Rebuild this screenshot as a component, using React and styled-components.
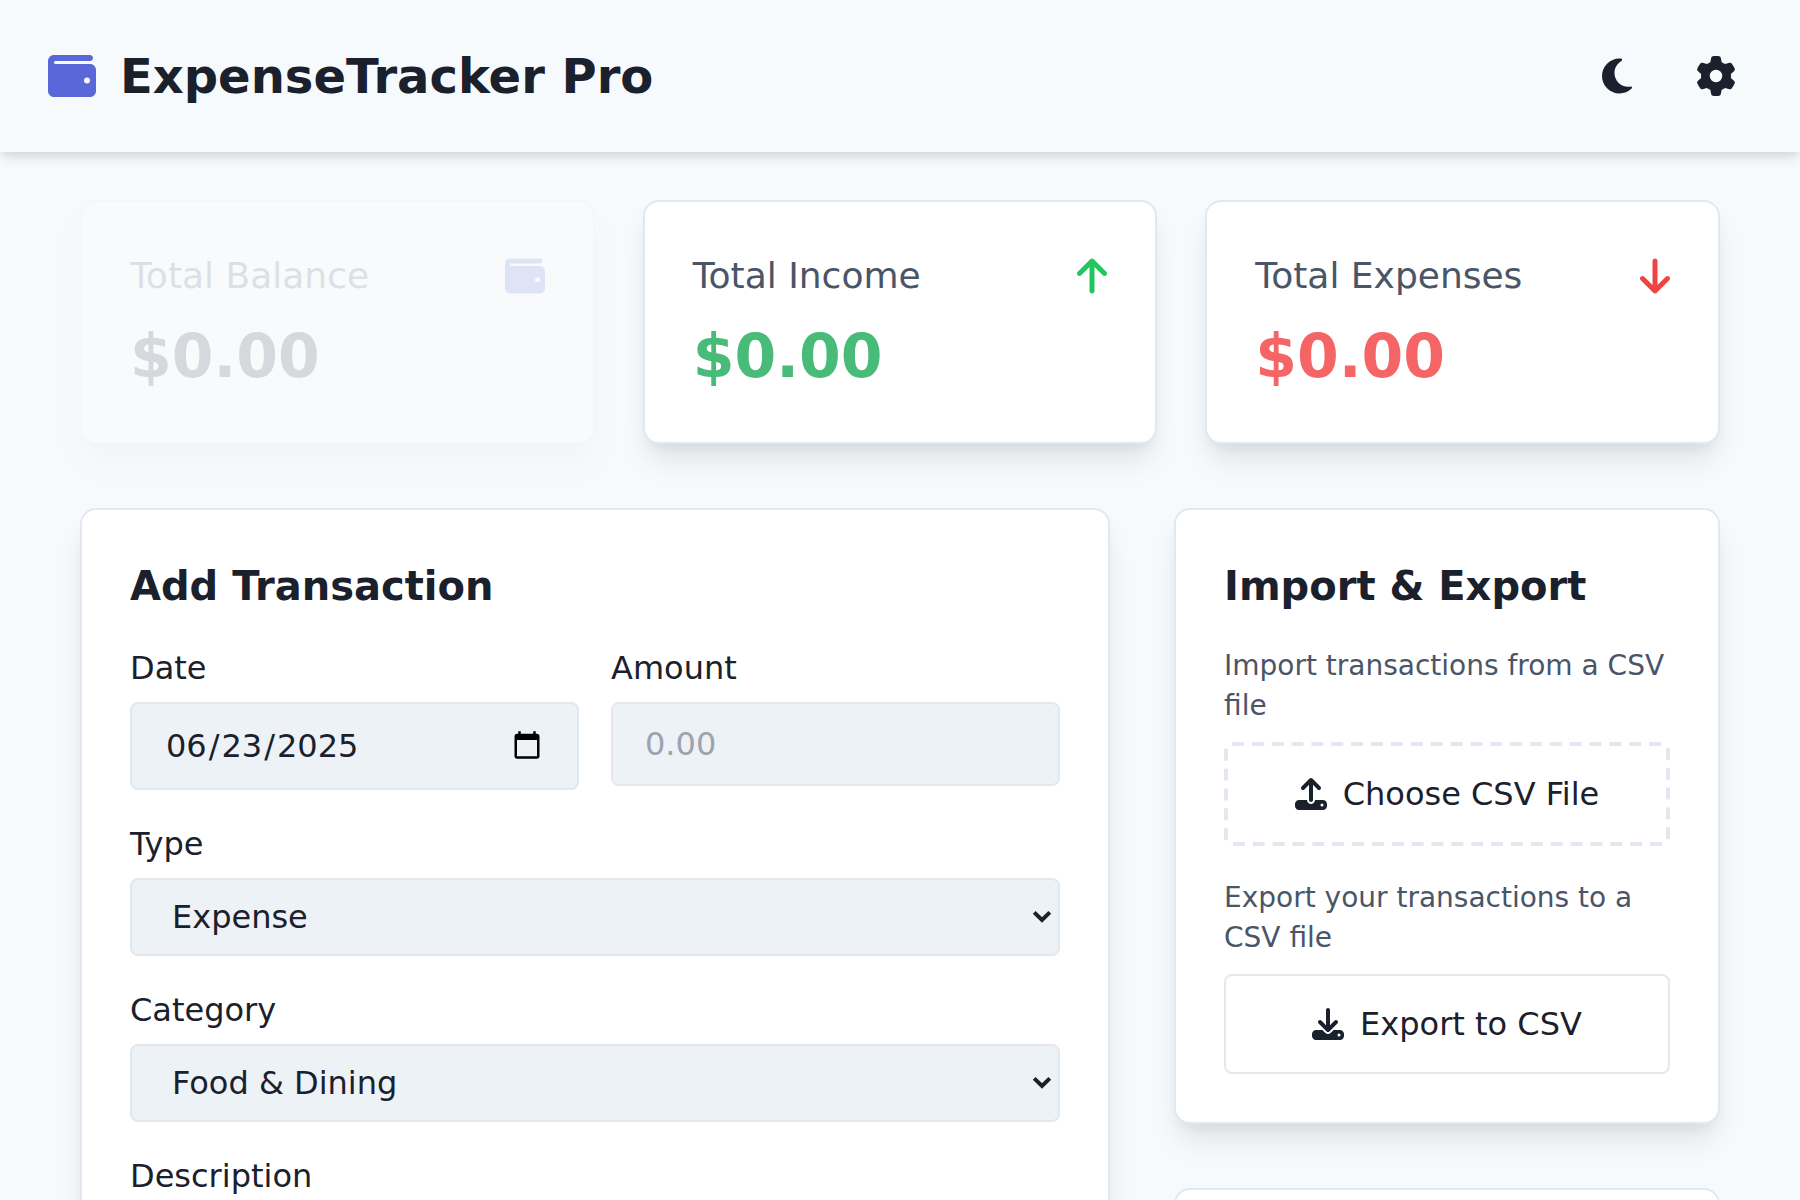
import React, { useState } from 'react';
import styled, { createGlobalStyle, ThemeProvider } from 'styled-components';
import {
  FaArrowDown,
  FaArrowUp,
  FaDownload,
  FaGear,
  FaMoon,
  FaUpload,
  FaWallet,
} from 'react-icons/fa6';

const theme = {
  colors: {
    card: '#ffffff',
    field: '#edf2f7',
    border: '#e2e8f0',
    text: '#1a202c',
    muted: '#4a5568',
    placeholder: '#9ca3af',
    primary: '#5a67d8',
    income: '#48bb78',
    incomeIcon: '#22c55e',
    expense: '#f56565',
    expenseIcon: '#ef4444',
  },
  sizes: {
    tablet: '1100px',
  },
};

const GlobalStyle = createGlobalStyle`
  *, *::before, *::after {
    box-sizing: border-box;
  }
  body {
    margin: 0;
    background: #f7fafc;
    color: #1a202c;
    font-family: "DejaVu Sans", sans-serif;
    font-size: 32px;
    line-height: 48px;
  }
  h1, h2, h3, p {
    margin: 0;
  }
  button, input, select {
    font: inherit;
    color: inherit;
  }
  svg {
    display: block;
    flex-shrink: 0;
  }
`;

// these glyphs are 384 wide on a 512 grid, so the box is narrowed to fit
const MoonIcon = styled(FaMoon)`
  width: 30px;
`;

const UpIcon = styled(FaArrowUp)`
  width: 30px;
`;

const DownIcon = styled(FaArrowDown)`
  width: 30px;
`;

const Header = styled.header`
  display: flex;
  align-items: center;
  justify-content: space-between;
  padding: 32px 48px;
  box-shadow: 0 8px 12px -2px rgba(0, 0, 0, 0.1), 0 4px 8px -2px rgba(0, 0, 0, 0.06);
`;

const Brand = styled.div`
  display: flex;
  align-items: center;
  gap: 24px;
  font-size: 48px;
  svg {
    color: ${props => props.theme.colors.primary};
  }
  h1 {
    font-size: 48px;
    line-height: 64px;
    font-weight: 700;
  }
`;

const HeaderActions = styled.div`
  display: flex;
  gap: 32px;
`;

const IconButton = styled.button`
  display: flex;
  align-items: center;
  padding: 16px;
  border: 0;
  border-radius: 50%;
  background: transparent;
  font-size: 40px;
  min-height: 88px;
  cursor: pointer;
`;

const Main = styled.main`
  padding: 48px 80px;
`;

const Card = styled.section`
  padding: 48px;
  background: ${props => props.theme.colors.card};
  border: 2px solid ${props => props.theme.colors.border};
  border-radius: 16px;
  box-shadow: 0 20px 30px -6px rgba(0, 0, 0, 0.1), 0 8px 12px -4px rgba(0, 0, 0, 0.05);
`;

const Summary = styled.div`
  display: grid;
  grid-template-columns: repeat(3, minmax(0, 1fr));
  gap: 48px;
  margin-bottom: 64px;
  @media screen and (max-width: ${props => props.theme.sizes.tablet}) {
    grid-template-columns: minmax(0, 1fr);
  }
`;

const SummaryCard = styled(Card)`
  opacity: ${props => (props.$faded ? 0.15 : 1)};
`;

const SummaryTop = styled.div`
  display: flex;
  align-items: center;
  justify-content: space-between;
  margin-bottom: 16px;
  h3 {
    color: ${props => props.theme.colors.muted};
    font-size: 36px;
    line-height: 52px;
    font-weight: 400;
  }
  svg {
    color: ${props => props.$iconColor};
    font-size: 40px;
  }
`;

const SummaryValue = styled.p`
  color: ${props => props.$color};
  font-size: 60px;
  line-height: 76px;
  font-weight: 700;
`;

const Columns = styled.div`
  display: grid;
  grid-template-columns: minmax(0, 1fr) 546px;
  align-items: start;
  gap: 64px;
  @media screen and (max-width: ${props => props.theme.sizes.tablet}) {
    grid-template-columns: minmax(0, 1fr);
  }
`;

const Side = styled.div`
  display: grid;
  gap: 64px;
`;

const CardTitle = styled.h2`
  margin-bottom: 32px;
  font-size: 40px;
  line-height: 56px;
  font-weight: 700;
`;

const Form = styled.form`
  display: grid;
  gap: 32px;
`;

const FieldRow = styled.div`
  display: grid;
  grid-template-columns: repeat(2, minmax(0, 1fr));
  align-items: start;
  gap: 32px;
`;

const Field = styled.div`
  display: grid;
  gap: 12px;
  label {
    line-height: 44px;
  }
`;

const Input = styled.input`
  width: 100%;
  padding: 16px 32px;
  line-height: 48px;
  background: ${props => props.theme.colors.field};
  border: 2px solid ${props => props.theme.colors.border};
  border-radius: 8px;
  &::placeholder {
    color: ${props => props.theme.colors.placeholder};
  }
  &::-webkit-datetime-edit {
    padding: 1px 0;
  }
  &::-webkit-datetime-edit-month-field,
  &::-webkit-datetime-edit-day-field,
  &::-webkit-datetime-edit-year-field {
    padding: 0 2px;
  }
  &::-webkit-inner-spin-button {
    appearance: none;
  }
`;

const SelectBox = styled.div`
  display: grid;
  align-items: center;
  select,
  svg {
    grid-area: 1 / 1;
  }
  select {
    appearance: none;
    width: 100%;
    padding: 18px 40px;
    line-height: 38px;
    background: ${props => props.theme.colors.field};
    border: 2px solid ${props => props.theme.colors.border};
    border-radius: 8px;
  }
  svg {
    justify-self: end;
    margin-right: 8px;
    pointer-events: none;
  }
`;

const Hint = styled.p`
  margin-bottom: 16px;
  color: ${props => props.theme.colors.muted};
  font-size: 28px;
  line-height: 40px;
`;

const FilePicker = styled.label`
  position: relative;
  display: flex;
  align-items: center;
  justify-content: center;
  gap: 16px;
  margin-bottom: 32px;
  padding: 28px;
  border-radius: 8px;
  cursor: pointer;
  input {
    display: none;
  }
`;

// dashed outline, the dashes are longer than a css dashed border gives
const Dashes = styled.svg`
  position: absolute;
  inset: 0;
  width: 100%;
  height: 100%;
  pointer-events: none;
  rect {
    width: calc(100% - 4px);
    height: calc(100% - 4px);
    fill: none;
    stroke: ${props => props.theme.colors.border};
    stroke-width: 4px;
    stroke-dasharray: 12 8;
  }
`;

const OutlineButton = styled.button`
  display: flex;
  align-items: center;
  justify-content: center;
  gap: 16px;
  width: 100%;
  padding: 24px;
  background: transparent;
  border: 2px solid ${props => props.theme.colors.border};
  border-radius: 8px;
  cursor: pointer;
`;

const EmptyCard = styled(Card)`
  min-height: 200px;
`;

const Select = ({ id, label, options }) => {
  return (
    <Field>
      <label htmlFor={id}>{label}</label>
      <SelectBox>
        <select id={id}>
          {options.map(option => (
            <option key={option}>{option}</option>
          ))}
        </select>
        <svg width="20" height="14" viewBox="0 0 20 14" fill="none" aria-hidden="true">
          <path d="M2.2 2.4L10 10L17.8 2.4" stroke="#1a202c" strokeWidth="4" />
        </svg>
      </SelectBox>
    </Field>
  );
};

const SummaryItem = ({ title, value, icon, iconColor, color, faded }) => {
  return (
    <SummaryCard $faded={faded}>
      <SummaryTop $iconColor={iconColor}>
        <h3>{title}</h3>
        {icon}
      </SummaryTop>
      <SummaryValue $color={color}>{value}</SummaryValue>
    </SummaryCard>
  );
};

const App = () => {
  const [date, setDate] = useState('2025-06-23');
  const { colors } = theme;

  return (
    <ThemeProvider theme={theme}>
      <GlobalStyle />
      <Header>
        <Brand>
          <FaWallet />
          <h1>ExpenseTracker Pro</h1>
        </Brand>
        <HeaderActions>
          <IconButton type="button" aria-label="Toggle theme">
            <MoonIcon />
          </IconButton>
          <IconButton type="button" aria-label="Settings">
            <FaGear />
          </IconButton>
        </HeaderActions>
      </Header>
      <Main>
        <Summary>
          <SummaryItem
            title="Total Balance"
            value="$0.00"
            icon={<FaWallet />}
            iconColor={colors.primary}
            color={colors.text}
            faded
          />
          <SummaryItem
            title="Total Income"
            value="$0.00"
            icon={<UpIcon />}
            iconColor={colors.incomeIcon}
            color={colors.income}
          />
          <SummaryItem
            title="Total Expenses"
            value="$0.00"
            icon={<DownIcon />}
            iconColor={colors.expenseIcon}
            color={colors.expense}
          />
        </Summary>
        <Columns>
          <Card>
            <CardTitle>Add Transaction</CardTitle>
            <Form>
              <FieldRow>
                <Field>
                  <label htmlFor="date">Date</label>
                  <Input
                    id="date"
                    type="date"
                    value={date}
                    onChange={e => setDate(e.target.value)}
                  />
                </Field>
                <Field>
                  <label htmlFor="amount">Amount</label>
                  <Input id="amount" type="number" step="0.01" placeholder="0.00" />
                </Field>
              </FieldRow>
              <Select id="type" label="Type" options={['Expense', 'Income']} />
              <Select id="category" label="Category" options={['Food & Dining']} />
              <Field>
                <label htmlFor="description">Description</label>
                <Input id="description" type="text" />
              </Field>
            </Form>
          </Card>
          <Side>
            <Card>
              <CardTitle>Import &amp; Export</CardTitle>
              <Hint>Import transactions from a CSV file</Hint>
              <FilePicker>
                <Dashes aria-hidden="true">
                  <rect x="2" y="2" rx="6" pathLength="1080" />
                </Dashes>
                <FaUpload />
                Choose CSV File
                <input type="file" accept=".csv" />
              </FilePicker>
              <Hint>Export your transactions to a CSV file</Hint>
              <OutlineButton type="button">
                <FaDownload />
                Export to CSV
              </OutlineButton>
            </Card>
            <EmptyCard />
          </Side>
        </Columns>
      </Main>
    </ThemeProvider>
  );
};

export default App;
